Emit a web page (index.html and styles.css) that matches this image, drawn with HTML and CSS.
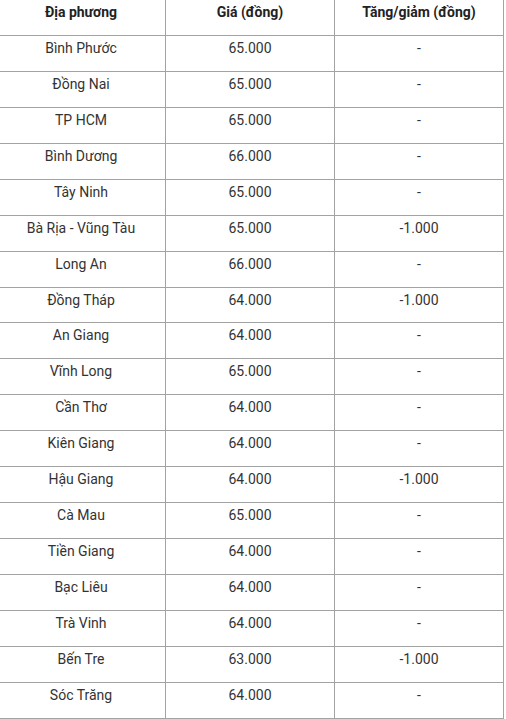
FILE: index.html
```html
<!DOCTYPE html>
<html lang="vi">
<head>
<meta charset="utf-8">
<title>Giá</title>
<link rel="stylesheet" href="styles.css">
</head>
<body>
<table class="price-table">
  <thead>
    <tr><th>Địa phương</th><th>Giá (đồng)</th><th>Tăng/giảm (đồng)</th></tr>
  </thead>
  <tbody>
    <tr><td>Bình Phước</td><td>65.000</td><td>-</td></tr>
    <tr><td>Đồng Nai</td><td>65.000</td><td>-</td></tr>
    <tr><td>TP HCM</td><td>65.000</td><td>-</td></tr>
    <tr><td>Bình Dương</td><td>66.000</td><td>-</td></tr>
    <tr><td>Tây Ninh</td><td>65.000</td><td>-</td></tr>
    <tr><td>Bà Rịa - Vũng Tàu</td><td>65.000</td><td>-1.000</td></tr>
    <tr><td>Long An</td><td>66.000</td><td>-</td></tr>
    <tr><td>Đồng Tháp</td><td>64.000</td><td>-1.000</td></tr>
    <tr><td>An Giang</td><td>64.000</td><td>-</td></tr>
    <tr><td>Vĩnh Long</td><td>65.000</td><td>-</td></tr>
    <tr><td>Cần Thơ</td><td>64.000</td><td>-</td></tr>
    <tr><td>Kiên Giang</td><td>64.000</td><td>-</td></tr>
    <tr><td>Hậu Giang</td><td>64.000</td><td>-1.000</td></tr>
    <tr><td>Cà Mau</td><td>65.000</td><td>-</td></tr>
    <tr><td>Tiền Giang</td><td>64.000</td><td>-</td></tr>
    <tr><td>Bạc Liêu</td><td>64.000</td><td>-</td></tr>
    <tr><td>Trà Vinh</td><td>64.000</td><td>-</td></tr>
    <tr><td>Bến Tre</td><td>63.000</td><td>-1.000</td></tr>
    <tr><td>Sóc Trăng</td><td>64.000</td><td>-</td></tr>
  </tbody>
</table>
</body>
</html>
```
FILE: styles.css
```css
html, body {
  margin: 0;
  padding: 0;
  background: #ffffff;
}
body {
  font-family: Roboto, "Liberation Sans", Arial, sans-serif;
  font-size: 14px;
  color: #333333;
  overflow: hidden;
}
.price-table {
  border-collapse: separate;
  border-spacing: 0;
  margin-left: -3px;
  table-layout: fixed;
  width: 507px;
}
.price-table th,
.price-table td {
  width: 168px;
  box-sizing: border-box;
  height: 35.95px;
  padding: 2px 4px 0;
  line-height: 20px;
  text-align: center;
  vertical-align: top;
  border-right: 1px solid #a3a3a3;
  border-bottom: 1px solid #a3a3a3;
}
.price-table th {
  font-weight: 700;
  color: #222222;
}
```
